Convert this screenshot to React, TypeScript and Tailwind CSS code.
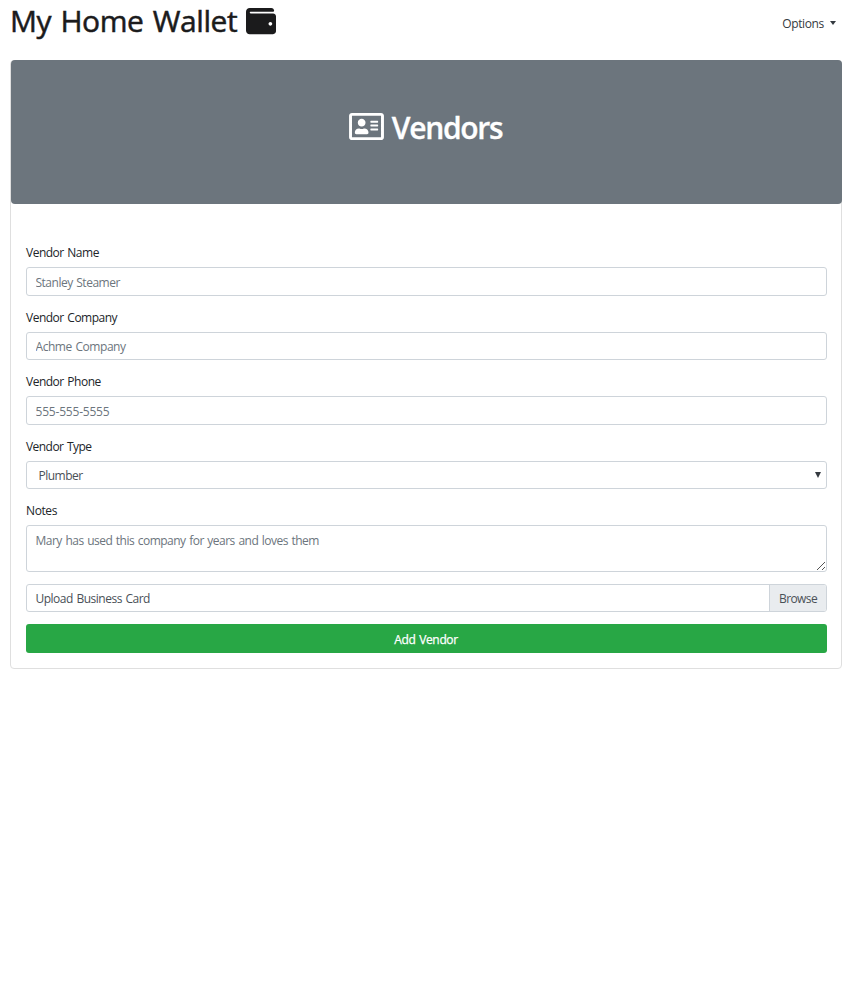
import { FaRegAddressCard, FaWallet } from "react-icons/fa";

const control =
  "block w-full rounded-[3px] border border-[#ced4da] bg-white px-[8.5px] text-[#495057] outline-none placeholder:text-[#6c757d] placeholder:opacity-100";

function Field({
  label,
  placeholder,
  tracking,
  className,
  inputClass,
}: {
  label: string;
  placeholder: string;
  tracking: string;
  className: string;
  inputClass: string;
}) {
  return (
    <div className={className}>
      <label className="block h-[22px] leading-[16px] tracking-[-0.5px] [word-spacing:1px]">{label}</label>
      <input type="text" placeholder={placeholder} className={`${control} ${tracking} ${inputClass}`} />
    </div>
  );
}

export default function App() {
  return (
    <div className="min-h-[996px] bg-white font-['Open_Sans','Noto_Sans',sans-serif] text-[12px] leading-[18px] text-[#212529]">
      <header className="flex h-[60px] items-start justify-between pl-[10px] pr-[19px]">
        <h1 className="flex h-[42px] items-center text-[30px] font-medium leading-[42px] text-[#1b1b1c]">
          <span className="w-[236px] whitespace-nowrap tracking-[-0.45px] [-webkit-text-stroke:0.5px_#1b1b1c] [word-spacing:2px]">My Home Wallet</span>
          <FaWallet className="size-[30px]" />
        </h1>
        <button className="mt-[15px] flex items-center tracking-[-0.35px] text-[#343a40]">
          Options
          <span className="ml-[6px] mt-[-2px] border-x-[3.5px] border-t-[4px] border-x-transparent border-t-[#343a40]" />
        </button>
      </header>

      <main className="ml-[10px] flex h-[609px] w-[832px] flex-col rounded-[4px] border border-[#dfdfdf]">
        <div className="-mr-px -mt-px flex h-[144px] shrink-0 items-center justify-center rounded-[4px] bg-[#6c757d] pb-[9px] text-white">
          <FaRegAddressCard className="-mt-[3px] h-[31px] w-[35px]" />
          <h2 className="ml-[8px] mr-[2px] whitespace-nowrap text-[30px] font-semibold leading-[36px] tracking-[-1.3px] [-webkit-text-stroke:0.3px_white]">Vendors</h2>
        </div>

        <form className="flex flex-col pl-[15px] pr-[14px] pt-[41px]">
          <Field label="Vendor Name" placeholder="Stanley Steamer" tracking="tracking-[-0.5px] [word-spacing:1px]" className="h-[65px]" inputClass="h-[29px] pt-[2px]" />
          <Field label="Vendor Company" placeholder="Achme Company" tracking="tracking-[-0.45px] [word-spacing:1px]" className="h-[64px]" inputClass="h-[28px] pt-[1px]" />
          <Field label="Vendor Phone" placeholder="555-555-5555" tracking="tracking-[-0.2px]" className="h-[65px]" inputClass="h-[29px] pt-[2px]" />
          <div className="h-[64px]">
            <label className="block h-[22px] leading-[16px] tracking-[-0.55px] [word-spacing:1px]">Vendor Type</label>
            <div className="relative">
              <select className={`${control} h-[28px] appearance-none pl-[11.5px] pt-[1px] tracking-[-0.5px]`}>
                <option>Plumber</option>
              </select>
              <svg className="absolute right-[6px] top-[11px]" width="6" height="7" viewBox="0 0 6 7">
                <path d="M0 0h6L3 6z" fill="#343a40" />
              </svg>
            </div>
          </div>
          <div className="h-[81px]">
            <label className="block h-[22px] leading-[16px] tracking-[-0.4px]">Notes</label>
            <div className="relative">
              <textarea
                placeholder="Mary has used this company for years and loves them"
                className={`${control} h-[47px] resize-none overflow-hidden pt-[6px] tracking-[-0.52px] [word-spacing:1px]`}
              />
              <svg className="absolute bottom-[1px] right-[1px]" width="10" height="10" viewBox="0 0 10 10" stroke="#555" fill="none">
                <path d="M1 9L9 1M6 9L9 6" />
              </svg>
            </div>
          </div>
          <div className="flex h-[28px] overflow-hidden rounded-[3px] border border-[#ced4da] text-[#495057]">
            <span className="flex-1 pl-[8.5px] pt-[5px] tracking-[-0.5px] [word-spacing:1px]">Upload Business Card</span>
            <span className="w-[57px] border-l border-[#ced4da] bg-[#e9ecef] pl-[9px] pt-[5px] tracking-[-0.6px]">Browse</span>
          </div>
          <button type="button" className="mt-[12px] h-[29px] rounded-[3px] bg-[#28a745] pr-px pt-[2px] font-medium tracking-[-0.35px] text-white [-webkit-text-stroke:0.25px_white] [word-spacing:1px]">
            Add Vendor
          </button>
        </form>
      </main>
    </div>
  );
}
